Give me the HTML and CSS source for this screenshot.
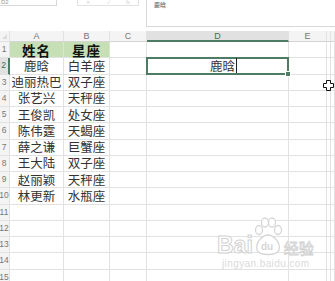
FILE: index.html
```html
<!DOCTYPE html>
<html lang="zh-CN">
<head>
  <meta charset="UTF-8" />
  <title>Sheet</title>
  <link rel="stylesheet" href="styles.css">
</head>
<body>
  <div class="toolbar">
    <div class="name-box">D2</div>
    <div class="fx-box"><span>✕</span><span>✓</span><span>fx</span></div>
    <div class="formula-box">鹿晗</div>
  </div>

  <div class="sheet" id="sheet"></div>

  <svg class="pointer" width="11" height="11" viewBox="0 0 11 11">
    <path d="M3.5 0.5h4v3h3v4h-3v3h-4v-3h-3v-4h3z" fill="#fff" stroke="#111" stroke-width="1"/>
  </svg>

  <div class="watermark">
    <div class="wm-logo">
      <span class="wm-bai">Bai</span>
      <svg width="30" height="40" viewBox="0 0 30 40">
        <g fill="#fff" stroke="#d6d6d6" stroke-width="1.3">
          <ellipse cx="6" cy="13" rx="3.5" ry="4.5"/>
          <ellipse cx="12" cy="5.5" rx="3.5" ry="4.5"/>
          <ellipse cx="19" cy="5.5" rx="3.5" ry="4.5"/>
          <ellipse cx="25" cy="13" rx="3.5" ry="4.5"/>
          <path d="M4 33 C2 25 10 18 15 18 C20 18 28 25 26 33 C24 39 6 39 4 33 Z"/>
        </g>
        <text x="8" y="33" font-size="10" font-weight="bold" fill="#d6d6d6" font-family="Liberation Sans, sans-serif">du</text>
      </svg>
      <span class="wm-jy">经验</span>
    </div>
    <div class="wm-url">jingyan.baidu.com</div>
  </div>

  <script>
    const sheet = document.getElementById("sheet");
    const cols = ["A", "B", "C", "D", "E", "F", "G"];
    const data = [
      ["姓名", "星座"],
      ["鹿晗", "白羊座"],
      ["迪丽热巴", "双子座"],
      ["张艺兴", "天秤座"],
      ["王俊凯", "处女座"],
      ["陈伟霆", "天蝎座"],
      ["薛之谦", "巨蟹座"],
      ["王大陆", "双子座"],
      ["赵丽颖", "天秤座"],
      ["林更新", "水瓶座"]
    ];

    function cell(cls, text) {
      const div = document.createElement("div");
      div.className = cls;
      if (text) div.textContent = text;
      sheet.appendChild(div);
      return div;
    }

    cell("corner");
    cols.forEach(c => cell(c === "D" ? "col-head selected" : "col-head", c === "F" || c === "G" ? "" : c));

    for (let r = 1; r <= 15; r++) {
      cell(r === 2 ? "row-head selected" : "row-head", r);
      const row = data[r - 1] || [];
      cols.forEach((c, i) => {
        let cls = "cell";
        if (r === 1 && i < 2) cls += " title";
        const div = cell(cls, row[i]);
        if (r === 2 && c === "D") {
          div.classList.add("active");
          div.innerHTML = '<span>鹿晗</span><span class="caret"></span>';
        }
      });
    }
  </script>
</body>
</html>
```

FILE: styles.css
```css
body {
  margin: 0;
  width: 335px;
  height: 281px;
  overflow: hidden;
  background: #fff;
  font-family: "Noto Sans CJK SC", sans-serif;
  position: relative;
}

.toolbar {
  display: flex;
  align-items: flex-start;
  height: 31px;
}

.name-box {
  width: 57px;
  height: 6px;
  border: 1px solid #d8d8d8;
  border-top: none;
  border-left: none;
  font: 6px/5px "Liberation Sans", sans-serif;
  color: #999;
  box-sizing: border-box;
  padding-left: 1px;
}

.fx-box {
  width: 62px;
  height: 6px;
  margin-left: 20px;
  border: 1px solid #e2e2e2;
  border-top: none;
  display: flex;
  justify-content: space-around;
  font: 5px/5px "Liberation Sans", sans-serif;
  color: #cfcfcf;
  box-sizing: border-box;
}

.formula-box {
  flex: 1;
  height: 27px;
  margin: 0 -2px 0 7px;
  border: 1px solid #d8d8d8;
  border-top: none;
  padding-left: 7px;
  font-size: 6px;
  line-height: normal;
  color: #555;
  box-sizing: border-box;
}

.sheet {
  display: grid;
  grid-template-columns: 10px 54px 46px 37px 142px 38px 4px 1fr;
  grid-template-rows: 11px repeat(15, 16.25px);
}

.sheet > div {
  box-sizing: border-box;
  border-right: 1px solid #e2e2e2;
  border-bottom: 1px solid #e2e2e2;
  white-space: nowrap;
  overflow: visible;
}

.corner {
  background: #f4f4f4;
  position: relative;
}

.corner::after {
  content: "";
  position: absolute;
  right: 2px;
  bottom: 2px;
  border-left: 5px solid transparent;
  border-bottom: 5px solid #dcdcdc;
}

.col-head {
  background: #f4f4f4;
  text-align: center;
  font: 9px/10px "Liberation Sans", sans-serif;
  color: #777;
  border-bottom-color: #d4d4d4 !important;
}

.col-head.selected {
  background: #e1e1e1;
  color: #3f6f55;
  border-bottom: 2px solid #4d7b64 !important;
}

.row-head {
  background: #f4f4f4;
  text-align: center;
  font: 8.5px/15px "Liberation Sans", sans-serif;
  color: #777;
  overflow: hidden !important;
  text-indent: -1px;
}

.row-head.selected {
  background: #e1e1e1;
  color: #3f6f55;
  border-right: 2px solid #4d7b64 !important;
}

.cell {
  display: flex;
  justify-content: center;
  align-items: center;
  font-size: 12.5px;
  line-height: 14px;
  color: #333;
}

.cell.title {
  background: #c6dfb4;
  border-right-color: #d8e8cc !important;
  color: #111;
  font-weight: bold;
  font-size: 13.5px;
  letter-spacing: 1px;
}

.cell.active {
  position: relative;
  border: 2px solid #4d7b64 !important;
  margin: -1px 0 0 -1px;
  padding-left: 12px;
}

.cell.active::after {
  content: "";
  position: absolute;
  right: -4px;
  bottom: -4px;
  width: 4px;
  height: 4px;
  background: #4d7b64;
  border: 1px solid #fff;
}

.caret {
  width: 1px;
  height: 15px;
  background: #222;
  margin-left: 1px;
}

.pointer {
  position: absolute;
  left: 323px;
  top: 80px;
}

.watermark {
  position: absolute;
  left: 217px;
  top: 217px;
}

.wm-logo {
  display: flex;
  align-items: flex-end;
}

.wm-bai {
  font: bold 23px/22px "Liberation Sans", sans-serif;
  color: #fff;
  -webkit-text-stroke: 1px #d2d2d2;
  margin-bottom: 1px;
}

.wm-jy {
  font-size: 15px;
  line-height: 19px;
  color: #fff;
  -webkit-text-stroke: 0.8px #d2d2d2;
  margin-left: 1px;
}

.wm-url {
  font: 10px/11px "Liberation Sans", sans-serif;
  color: #dadada;
  letter-spacing: 0.4px;
  margin: 1px 0 0 5px;
}
```
